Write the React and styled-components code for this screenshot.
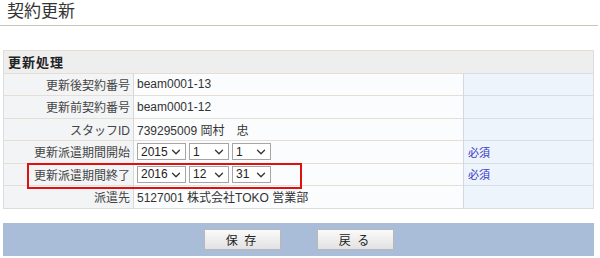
import React from 'react';
import styled, { createGlobalStyle } from 'styled-components';
import { ChevronDown } from 'lucide-react';

const GlobalStyle = createGlobalStyle`
  html, body {
    margin: 0;
    padding: 0;
    background: #ffffff;
    font-family: "Liberation Sans", "Noto Sans CJK JP", sans-serif;
    color: #333333;
  }
`;

const rows = [
  { label: '更新後契約番号', value: 'beam0001-13' },
  { label: '更新前契約番号', value: 'beam0001-12' },
  { label: 'スタッフID', value: '739295009 岡村\u3000忠' },
  { label: '更新派遣期間開始', dates: ['2015', '1', '1'], required: true },
  { label: '更新派遣期間終了', dates: ['2016', '12', '31'], required: true },
  { label: '派遣先', value: '5127001 株式会社TOKO 営業部' },
];

const selectWidths = [49, 40, 39];

const App = () => {
  return (
    <Page>
      <GlobalStyle />
      <Title>契約更新</Title>
      <TableWrap>
        <FormTable>
          <colgroup>
            <col style={{ width: 130 }} />
            <col style={{ width: 330 }} />
            <col />
          </colgroup>
          <tbody>
            <tr>
              <HeadCell colSpan={3}>更新処理</HeadCell>
            </tr>
            {rows.map((row) => (
              <tr key={row.label}>
                <LabelCell>{row.label}</LabelCell>
                <ValueCell>
                  {row.dates ? (
                    <SelectGroup>
                      {row.dates.map((d, i) => (
                        <SelectBox key={i} style={{ width: selectWidths[i] }}>
                          <NativeSelect defaultValue={d}>
                            <option value={d}>{d}</option>
                          </NativeSelect>
                          <Chevron>
                            <ChevronDown size={14} strokeWidth={2.2} />
                          </Chevron>
                        </SelectBox>
                      ))}
                    </SelectGroup>
                  ) : (
                    row.value
                  )}
                </ValueCell>
                <NoteCell>{row.required && <Required href="#">必須</Required>}</NoteCell>
              </tr>
            ))}
          </tbody>
        </FormTable>
        <Highlight />
      </TableWrap>
      <ButtonBar>
        <ActionButton>保&nbsp;存</ActionButton>
        <ActionButton>戻&nbsp;る</ActionButton>
      </ButtonBar>
    </Page>
  );
};

const Page = styled.div`
  width: 600px;
  height: 258px;
  overflow: hidden;
`;

const Title = styled.h1`
  margin: 0 2px 0 0;
  height: 26px;
  padding: 1px 0 0 7px;
  box-sizing: border-box;
  font-size: 17px;
  font-weight: normal;
  line-height: 21px;
  color: #333333;
  border-bottom: 1px solid #c9c6ba;
`;

const TableWrap = styled.div`
  position: relative;
  margin: 24px 0 0 3px;
  width: 591px;
`;

const FormTable = styled.table`
  width: 100%;
  border-collapse: collapse;
  table-layout: fixed;
  border: 1px solid #dcdcdc;
  font-size: 12px;

  td {
    height: 21.5px;
    padding: 0;
    border-top: 1px solid #e6ddd5;
  }
`;

const HeadCell = styled.td`
  background: #eeeeee;
  font-weight: bold;
  font-size: 13px;
  padding-left: 4px !important;
  color: #222222;
  letter-spacing: 1px;
`;

const LabelCell = styled.td`
  background: #f3f4f6;
  text-align: right;
  padding-right: 3px !important;
  white-space: nowrap;
  color: #444444;
  border-right: 1px solid #d8d8d8;
`;

const ValueCell = styled.td`
  background: #fbfcfd;
  padding-left: 3px !important;
  white-space: nowrap;
  color: #333333;
`;

const NoteCell = styled.td`
  background: #eef4fb;
  border-left: 1px solid #d4d9e0;
  padding-left: 4px !important;
  border-top-color: #d9dee6 !important;
`;

const Required = styled.a`
  color: #3535c8;
  font-size: 11px;
  text-decoration: none;
`;

const SelectGroup = styled.div`
  display: flex;
  gap: 3px;
  align-items: center;
`;

const SelectBox = styled.div`
  position: relative;
  height: 17px;
`;

const NativeSelect = styled.select`
  appearance: none;
  -webkit-appearance: none;
  width: 100%;
  height: 100%;
  margin: 0;
  padding: 0 0 0 3px;
  border: 1px solid #a5a5a5;
  border-radius: 0;
  background: #ffffff;
  font-family: "Liberation Sans", sans-serif;
  font-size: 12px;
  color: #222222;
  outline: none;
`;

const Chevron = styled.span`
  position: absolute;
  right: 3px;
  top: 2px;
  color: #333333;
  pointer-events: none;
  display: flex;
`;

const Highlight = styled.div`
  position: absolute;
  left: 24px;
  top: 113px;
  width: 275px;
  height: 26px;
  border: 2px solid #e01010;
  box-sizing: border-box;
  pointer-events: none;
`;

const ButtonBar = styled.div`
  margin: 14px 0 0 3px;
  width: 591px;
  height: 33px;
  background: #aabdd8;
  display: flex;
  justify-content: center;
  align-items: center;
  gap: 36px;
`;

const ActionButton = styled.button`
  width: 77px;
  height: 21px;
  padding: 0;
  border: 1px solid #b8b8b8;
  border-radius: 1px;
  background: linear-gradient(#fafafa, #e2e2e2);
  font-family: "Noto Sans CJK JP", sans-serif;
  font-size: 12px;
  line-height: 19px;
  color: #222222;
  letter-spacing: 2px;
  cursor: pointer;
`;

export default App;
